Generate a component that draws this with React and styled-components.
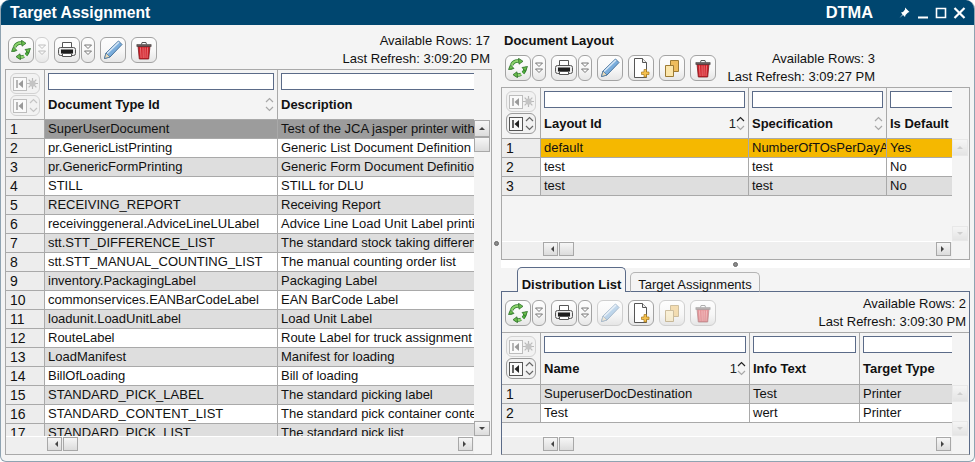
import React from "react";
import styled, { createGlobalStyle } from "styled-components";

const GlobalStyle = createGlobalStyle`
  html, body { margin: 0; padding: 0; background: #fff; }
  body { font-family: "Liberation Sans", Arial, sans-serif; color: #111; overflow: hidden; }
`;

const Window = styled.div`
  width: 975px;
  height: 462px;
  box-sizing: border-box;
  display: flex;
  flex-direction: column;
  background: #f4f4f4;
  border: 1px solid #8fa3b1;
  border-top: none;
  border-radius: 9px 9px 6px 6px;
  overflow: hidden;
`;
const TitleBar = styled.div`
  height: 25px;
  flex: none;
  background: #00466f;
  color: #fff;
  display: flex;
  align-items: center;
  font-size: 15.7px;
  font-weight: bold;
  padding: 0 8px 0 9px;
`;
const TitleText = styled.span`
  flex: 1;
`;
const AppCode = styled.span`
  margin-right: 21px;
  font-size: 16.4px;
`;
const WindowIcon = styled.svg`
  width: 14px;
  height: 14px;
  margin-left: 4px;
  display: block;
`;
const Body = styled.div`
  flex: 1;
  min-height: 0;
  display: flex;
`;
const LeftPane = styled.div`
  width: 487px;
  margin-left: 4px;
  padding: 12px 0 6px;
  display: flex;
  flex-direction: column;
  flex: none;
`;
const VSplitter = styled.div`
  width: 9px;
  flex: none;
  display: flex;
  align-items: center;
  justify-content: center;
`;
const Dot = styled.span`
  width: 5px;
  height: 5px;
  border-radius: 50%;
  background: #8a8a8a;
  border: 1px solid #666;
  box-sizing: border-box;
`;
const RightPane = styled.div`
  width: 469px;
  flex: none;
  display: flex;
  flex-direction: column;
  padding-bottom: 6px;
`;
const TopSection = styled.div`
  height: 235px;
  flex: none;
  display: flex;
  flex-direction: column;
`;
const SectionTitle = styled.div`
  height: 30px;
  flex: none;
  box-sizing: border-box;
  padding: 8px 0 0 3px;
  font-size: 13px;
  line-height: 15px;
  font-weight: bold;
`;
const HSplitter = styled.div`
  height: 8px;
  flex: none;
  background: #fff;
  display: flex;
  align-items: center;
  justify-content: center;
`;
const TabStrip = styled.div`
  height: 24px;
  flex: none;
  display: flex;
  align-items: flex-end;
  padding-left: 16px;
  gap: 4px;
  position: relative;
  z-index: 1;
  margin-bottom: -1px;
`;
const Tab = styled.div`
  box-sizing: border-box;
  height: ${(p) => (p.$active ? 25 : 20)}px;
  width: ${(p) => p.$width}px;
  border: 1px solid ${(p) => (p.$active ? "#5b6b88" : "#b4b4b4")};
  border-bottom: ${(p) => (p.$active ? "none" : "1px solid #5b6b88")};
  border-radius: 5px 5px 0 0;
  background: ${(p) => (p.$active ? "#f6f6f6" : "#f4f4f4")};
  font-size: 13px;
  font-weight: ${(p) => (p.$active ? "bold" : "normal")};
  text-align: center;
  line-height: ${(p) => (p.$active ? 33 : 23)}px;
  white-space: nowrap;
`;
const TabPanel = styled.div`
  flex: 1;
  min-height: 0;
  border: 1px solid #5b6b88;
  border-bottom-color: #a9a9a9;
  padding-top: 8px;
  display: flex;
  flex-direction: column;
`;
const Toolbar = styled.div`
  height: 26px;
  flex: none;
  display: flex;
  align-items: center;
  padding: 0 ${(p) => p.$right}px 0 ${(p) => p.$left}px;
  margin-bottom: 6px;
`;
const Tool = styled.button`
  width: 26px;
  height: 26px;
  box-sizing: border-box;
  padding: 0;
  border: 1px solid ${(p) => (p.$off ? "#cfcfcf" : "#a3a3a3")};
  border-radius: 6px;
  background: linear-gradient(#fdfdfd, #f7f7f7 55%, #e6e6e6);
  display: flex;
  align-items: center;
  justify-content: center;
  margin-right: 5px;
  & svg { opacity: ${(p) => (p.$off ? 0.45 : 1)}; }
`;
const SplitTool = styled(Tool)`
  margin-right: 1px;
`;
const DropTool = styled(Tool)`
  width: 14px;
  margin-right: 5px;
`;
const Status = styled.div`
  margin-left: auto;
  text-align: right;
  font-size: 13px;
  line-height: 18px;
  white-space: nowrap;
`;

const GridBox = styled.div`
  flex: 1;
  min-height: 0;
  box-sizing: border-box;
  display: grid;
  grid-template-columns: minmax(0, 1fr) 17px;
  grid-template-rows: minmax(0, 1fr) 18px;
  border: 1px solid #a9a9a9;
  ${(p) => p.$bare && "border-width: 1px 0 0 0;"}
`;
const Viewport = styled.div`
  overflow: hidden;
  min-width: 0;
`;
const HeadRow = styled.div`
  display: flex;
  width: max-content;
  height: ${(p) => p.$height}px;
  box-sizing: border-box;
  border-bottom: 1px solid #a9a9a9;
`;
const CornerCell = styled.div`
  width: 39px;
  flex: none;
  box-sizing: border-box;
  border-right: 1px solid #a9a9a9;
  padding: 3px 0 0 4px;
  display: flex;
  flex-direction: column;
  gap: 1px;
`;
const CornerGroup = styled.div`
  width: 30px;
  height: 21px;
  box-sizing: border-box;
  border: 1px solid ${(p) => (p.$on ? "#9a9a9a" : "#d2d2d2")};
  border-radius: 6px;
  background: #f2f2f2;
  display: flex;
  align-items: center;
  justify-content: space-between;
  padding: 0 1px 0 2px;
`;
const FirstPage = styled.span`
  width: 14px;
  height: 14px;
  box-sizing: border-box;
  border: 1px solid ${(p) => (p.$on ? "#555" : "#bdbdbd")};
  background: #fafafa;
  display: flex;
  align-items: center;
  justify-content: center;
`;
const HeadCell = styled.div`
  width: ${(p) => p.$width}px;
  flex: none;
  box-sizing: border-box;
  border-right: 1px solid #a9a9a9;
  padding: 3px 3px 0;
  display: flex;
  flex-direction: column;
`;
const FilterInput = styled.input`
  display: block;
  width: 100%;
  height: 17px;
  box-sizing: border-box;
  border: 1px solid #5b6b88;
  background: #fff;
  padding: 0;
  outline: none;
  flex: none;
`;
const HeadLabel = styled.div`
  flex: 1;
  display: flex;
  align-items: center;
  justify-content: space-between;
  font-size: 13px;
  font-weight: bold;
  white-space: nowrap;
`;
const SortBox = styled.span`
  display: flex;
  align-items: center;
  font-weight: normal;
  font-size: 13px;
  color: #222;
`;
const Row = styled.div`
  display: flex;
  width: max-content;
  height: 19px;
  box-sizing: border-box;
  font-size: 13px;
  line-height: 18px;
`;
const RowNum = styled.div`
  width: 39px;
  flex: none;
  box-sizing: border-box;
  padding-left: 4px;
  background: #ededed;
  border-right: 1px solid #a9a9a9;
  border-bottom: 1px solid #a9a9a9;
  font-size: 14px;
  line-height: 18px;
`;
const Cell = styled.div`
  width: ${(p) => p.$width}px;
  flex: none;
  box-sizing: border-box;
  padding: 0 3px;
  overflow: hidden;
  white-space: nowrap;
  background: ${(p) => p.$bg};
  border-right: 1px solid #a9a9a9;
  border-bottom: 1px solid #a9a9a9;
`;
const VBar = styled.div`
  padding-top: ${(p) => p.$top}px;
  display: flex;
  flex-direction: column;
  align-items: center;
  min-height: 0;
`;
const VTrack = styled.div`
  flex: 1;
`;
const HBar = styled.div`
  grid-column: 1 / 2;
  background: #efefef;
  border-top: 1px solid #fff;
  display: flex;
  align-items: flex-start;
  padding: 0 0 0 41px;
`;
const Corner = styled.div`
  background: #f4f4f4;
`;
const ScrollBtn = styled.div`
  width: ${(p) => p.$w || 15}px;
  height: ${(p) => p.$h || 14}px;
  flex: none;
  box-sizing: border-box;
  border: 1px solid ${(p) => (p.$off ? "#e2e2e2" : "#a8a8a8")};
  background: linear-gradient(#f6f6f6, #dcdcdc);
  display: flex;
  align-items: center;
  justify-content: center;
  margin-right: 1px;
  ${(p) => p.$end && "margin-left: auto;"}
  ${(p) => p.$off && "opacity: .65;"}
`;
const Arrow = styled.span`
  width: 0;
  height: 0;
  border: 3px solid transparent;
  ${(p) => `border-${p.$to}-color: ${p.$off ? "#bbb" : "#444"};`}
  ${(p) => p.$to === "bottom" && "margin-top: -3px;"}
  ${(p) => p.$to === "top" && "margin-bottom: -3px;"}
`;

// toolbar drawings
const RefreshIcon = () => (
  <svg width="20" height="20" viewBox="0 0 20 20">
    <g fill="none" strokeLinecap="butt">
      <path d="M3.600 7A7 7 0 0 1 11 3.100" stroke="#2f7d2a" strokeWidth="3.400" />
      <path d="M16.900 9A7 7 0 0 1 15 15" stroke="#2f7d2a" strokeWidth="3.400" />
      <path d="M13 16.300A7 7 0 0 1 7 16.400" stroke="#2f7d2a" strokeWidth="3.400" />
      <path d="M3 11.500A7 7 0 0 1 3.200 9" stroke="#2f7d2a" strokeWidth="3.400" />
      <path d="M3.600 7A7 7 0 0 1 11 3.100" stroke="#8ed46e" strokeWidth="2" />
      <path d="M16.900 9A7 7 0 0 1 15 15" stroke="#4fae3f" strokeWidth="2" />
      <path d="M13 16.300A7 7 0 0 1 7 16.400" stroke="#8ed46e" strokeWidth="2" />
      <path d="M3 11.500A7 7 0 0 1 3.200 9" stroke="#4fae3f" strokeWidth="2" />
    </g>
    <path d="M10.500 .3 15 3.300l-4 2.900zM19.500 8.500l-2 4.800-3.500-3.800zM9.500 19.700 5 16.700l4-2.900zM.5 11.500l2-4.800 3.500 3.800z" fill="#6cc04f" stroke="#22641f" strokeWidth=".7" />
  </svg>
);
const PrinterIcon = () => (
  <svg width="20" height="20" viewBox="0 0 20 20">
    <path d="M5.500 2.500h9v5h-9z" fill="#fff" stroke="#555" />
    <rect x="1.500" y="7.500" width="17" height="8" rx="2" fill="#ececec" stroke="#555" />
    <path d="M4 9.500h12v4H4z" fill="#1e1e1e" />
    <path d="M5.500 13.500h9v3h-9z" fill="#fff" stroke="#555" />
  </svg>
);
const PencilIcon = () => (
  <svg width="22" height="22" viewBox="0 0 22 22">
    <path d="M2.500 19.500 4 14 16.500 2 20 5.500 8 18z" fill="#7aaddc" stroke="#46729c" />
    <path d="M5 14.500 17 3" stroke="#d6e7f6" strokeWidth="1.600" />
    <path d="M2.500 19.500 4 14l4 4z" fill="#e8d9b8" stroke="#46729c" strokeWidth=".7" />
  </svg>
);
const TrashIcon = () => (
  <svg width="16" height="19" viewBox="0 0 16 19">
    <path d="M2 5h12l-1.300 13H3.300z" fill="#cf1f28" stroke="#7a1a1e" strokeWidth=".8" />
    <path d="M4.500 6.500l.6 10.500M7 6.500l.2 10.500M9.200 6.500 9 17M11.500 6.500 11 17" stroke="#f28a8e" strokeWidth=".8" />
    <path d="M.8 3.500h14.400v2H.8z" fill="#6a5a5a" stroke="#3a3a3a" strokeWidth=".5" />
    <path d="M5.500 3.500 6 1.500h4l.5 2" fill="none" stroke="#555" />
  </svg>
);
const NewDocIcon = () => (
  <svg width="22" height="22" viewBox="0 0 22 22">
    <path d="M4.500 1.500h8l4 4v15h-12z" fill="#fff" stroke="#555" />
    <path d="M12.500 1.500v4h4" fill="#eee" stroke="#555" />
    <path d="M14 12.500h2.500V15H19v2.500h-2.500V20H14v-2.500h-2.500V15H14z" fill="#f4c04e" stroke="#a87a1c" strokeWidth=".7" />
  </svg>
);
const CopyIcon = () => (
  <svg width="18" height="19" viewBox="0 0 18 19">
    <path d="M7.500 1.500h8v11h-8z" fill="#eebc5c" stroke="#9c7a34" />
    <path d="M2.500 6.500h8v11h-8z" fill="#fce6ab" stroke="#9c7a34" />
  </svg>
);
const DropArrows = () => (
  <svg width="10" height="14" viewBox="0 0 10 14">
    <path d="M1.500 2h7L5 5.500zM1.500 8h7L5 11.500z" fill="#fff" stroke="#666" strokeWidth=".9" />
  </svg>
);
const FirstIcon = ({ on }) => (
  <svg width="8" height="8" viewBox="0 0 8 8">
    <path d="M1 0v8" stroke={on ? "#222" : "#999"} strokeWidth="1.400" />
    <path d="M7 0v8L2.500 4z" fill={on ? "#222" : "#999"} />
  </svg>
);
const StarIcon = () => (
  <svg width="11" height="11" viewBox="0 0 12 12">
    <path d="M6 0v12M0 6h12M1.800 1.800l8.400 8.400M10.200 1.800l-8.400 8.400" stroke="#b9b9b9" strokeWidth="1.300" />
    <circle cx="6" cy="6" r="3.400" fill="#c4c4c4" />
  </svg>
);
const Chevrons = ({ up = "#a8a8a8", down = "#a8a8a8" }) => (
  <svg width="9" height="17" viewBox="0 0 9 17">
    <path d="M1 6l3.500-3.500L8 6" fill="none" stroke={up} strokeWidth="1.200" />
    <path d="M1 11l3.500 3.500L8 11" fill="none" stroke={down} strokeWidth="1.200" />
  </svg>
);

function ToolRow({ left, right, status, extra, offEdit, offCopy, offDelete, offDrop }) {
  return (
    <Toolbar $left={left} $right={right}>
      <SplitTool><RefreshIcon /></SplitTool>
      <DropTool $off={offDrop}><DropArrows /></DropTool>
      <SplitTool><PrinterIcon /></SplitTool>
      <DropTool><DropArrows /></DropTool>
      <Tool $off={offEdit}><PencilIcon /></Tool>
      {extra && <Tool><NewDocIcon /></Tool>}
      {extra && <Tool $off={offCopy}><CopyIcon /></Tool>}
      <Tool $off={offDelete}><TrashIcon /></Tool>
      <Status>
        <div>Available Rows: {status[0]}</div>
        <div>Last Refresh: {status[1]}</div>
      </Status>
    </Toolbar>
  );
}

function DataGrid({ columns, rows, head, activeFirst, selected, selectedColor, thumb, bare, barOff }) {
  return (
    <GridBox $bare={bare}>
      <Viewport>
        <HeadRow $height={head}>
          <CornerCell>
            <CornerGroup>
              <FirstPage><FirstIcon /></FirstPage>
              <StarIcon />
            </CornerGroup>
            <CornerGroup $on={activeFirst}>
              <FirstPage $on={activeFirst}><FirstIcon on={activeFirst} /></FirstPage>
              {activeFirst ? <Chevrons up="#666" down="#666" /> : <Chevrons up="#c4c4c4" down="#c4c4c4" />}
            </CornerGroup>
          </CornerCell>
          {columns.map((c) => (
            <HeadCell key={c.title} $width={c.width}>
              <FilterInput readOnly />
              <HeadLabel>
                {c.title}
                {c.sort && (
                  <SortBox>
                    {c.rank}
                    {c.rank ? <Chevrons up="#222" /> : <Chevrons />}
                  </SortBox>
                )}
              </HeadLabel>
            </HeadCell>
          ))}
        </HeadRow>
        {rows.map((r, i) => {
          const bg = i === 0 && selected ? selectedColor : i % 2 === 0 ? "#dedede" : "#fff";
          return (
            <Row key={i}>
              <RowNum>{i + 1}</RowNum>
              {columns.map((c, j) => (
                <Cell key={c.title} $width={c.width} $bg={bg}>{r[j]}</Cell>
              ))}
            </Row>
          );
        })}
      </Viewport>
      <VBar $top={head}>
        <ScrollBtn $w={16} $h={17} $off={barOff}><Arrow $to="bottom" $off={barOff} /></ScrollBtn>
        {thumb && <ScrollBtn $w={16} $h={15} />}
        <VTrack />
        <ScrollBtn $w={16} $h={15} $off={barOff}><Arrow $to="top" $off={barOff} /></ScrollBtn>
      </VBar>
      <HBar>
        <ScrollBtn><Arrow $to="right" /></ScrollBtn>
        <ScrollBtn />
        <ScrollBtn $end><Arrow $to="left" /></ScrollBtn>
      </HBar>
      <Corner />
    </GridBox>
  );
}

const docColumns = [
  { title: "Document Type Id", width: 233, sort: true },
  { title: "Description", width: 330 },
];
const docRows = [
  ["SuperUserDocument", "Test of the JCA jasper printer with parameters"],
  ["pr.GenericListPrinting", "Generic List Document Definition"],
  ["pr.GenericFormPrinting", "Generic Form Document Definition"],
  ["STILL", "STILL for DLU"],
  ["RECEIVING_REPORT", "Receiving Report"],
  ["receivinggeneral.AdviceLineLULabel", "Advice Line Load Unit Label printing"],
  ["stt.STT_DIFFERENCE_LIST", "The standard stock taking difference list"],
  ["stt.STT_MANUAL_COUNTING_LIST", "The manual counting order list"],
  ["inventory.PackagingLabel", "Packaging Label"],
  ["commonservices.EANBarCodeLabel", "EAN BarCode Label"],
  ["loadunit.LoadUnitLabel", "Load Unit Label"],
  ["RouteLabel", "Route Label for truck assignment"],
  ["LoadManifest", "Manifest for loading"],
  ["BillOfLoading", "Bill of loading"],
  ["STANDARD_PICK_LABEL", "The standard picking label"],
  ["STANDARD_CONTENT_LIST", "The standard pick container content list"],
  ["STANDARD_PICK_LIST", "The standard pick list"],
];
const layoutColumns = [
  { title: "Layout Id", width: 208, sort: true, rank: 1 },
  { title: "Specification", width: 138, sort: true },
  { title: "Is Default", width: 100 },
];
const layoutRows = [
  ["default", "NumberOfTOsPerDayAndClient", "Yes"],
  ["test", "test", "No"],
  ["test", "test", "No"],
];
const distColumns = [
  { title: "Name", width: 209, sort: true, rank: 1 },
  { title: "Info Text", width: 110 },
  { title: "Target Type", width: 120 },
];
const distRows = [
  ["SuperuserDocDestination", "Test", "Printer"],
  ["Test", "wert", "Printer"],
];

export default function App() {
  return (
    <>
      <GlobalStyle />
      <Window>
        <TitleBar>
          <TitleText>Target Assignment</TitleText>
          <AppCode>DTMA</AppCode>
          <WindowIcon viewBox="0 0 14 14">
            <path d="M7 1.500 11.500 6 10 6.500 7.500 9 7 11 5 9l-3.500 3 3-3.500L3 6.500l2-.5L7 3.500z" fill="#fff" />
          </WindowIcon>
          <WindowIcon viewBox="0 0 14 14">
            <path d="M2 10.500h10v2H2z" fill="#fff" />
          </WindowIcon>
          <WindowIcon viewBox="0 0 14 14">
            <path d="M2.500 2.500h9v9h-9z" fill="none" stroke="#fff" strokeWidth="1.600" />
          </WindowIcon>
          <WindowIcon viewBox="0 0 14 14">
            <path d="M2.500 2l10 10M12.500 2l-10 10" stroke="#fff" strokeWidth="2.200" />
          </WindowIcon>
        </TitleBar>
        <Body>
          <LeftPane>
            <ToolRow left={3} right={2} status={["17", "3:09:20 PM"]} offDrop />
            <DataGrid columns={docColumns} rows={docRows} head={50} selected selectedColor="#9c9c9c" thumb />
          </LeftPane>
          <VSplitter><Dot /></VSplitter>
          <RightPane>
            <TopSection>
              <SectionTitle>Document Layout</SectionTitle>
              <ToolRow left={4} right={95} status={["3", "3:09:27 PM"]} extra />
              <DataGrid columns={layoutColumns} rows={layoutRows} head={51} selected selectedColor="#f5b800" activeFirst barOff />
            </TopSection>
            <HSplitter><Dot /></HSplitter>
            <TabStrip>
              <Tab $active $width={109}>Distribution List</Tab>
              <Tab $width={130}>Target Assignments</Tab>
            </TabStrip>
            <TabPanel>
              <ToolRow left={3} right={3} status={["2", "3:09:30 PM"]} extra offEdit offCopy offDelete />
              <DataGrid columns={distColumns} rows={distRows} head={52} activeFirst bare barOff />
            </TabPanel>
          </RightPane>
        </Body>
      </Window>
    </>
  );
}
